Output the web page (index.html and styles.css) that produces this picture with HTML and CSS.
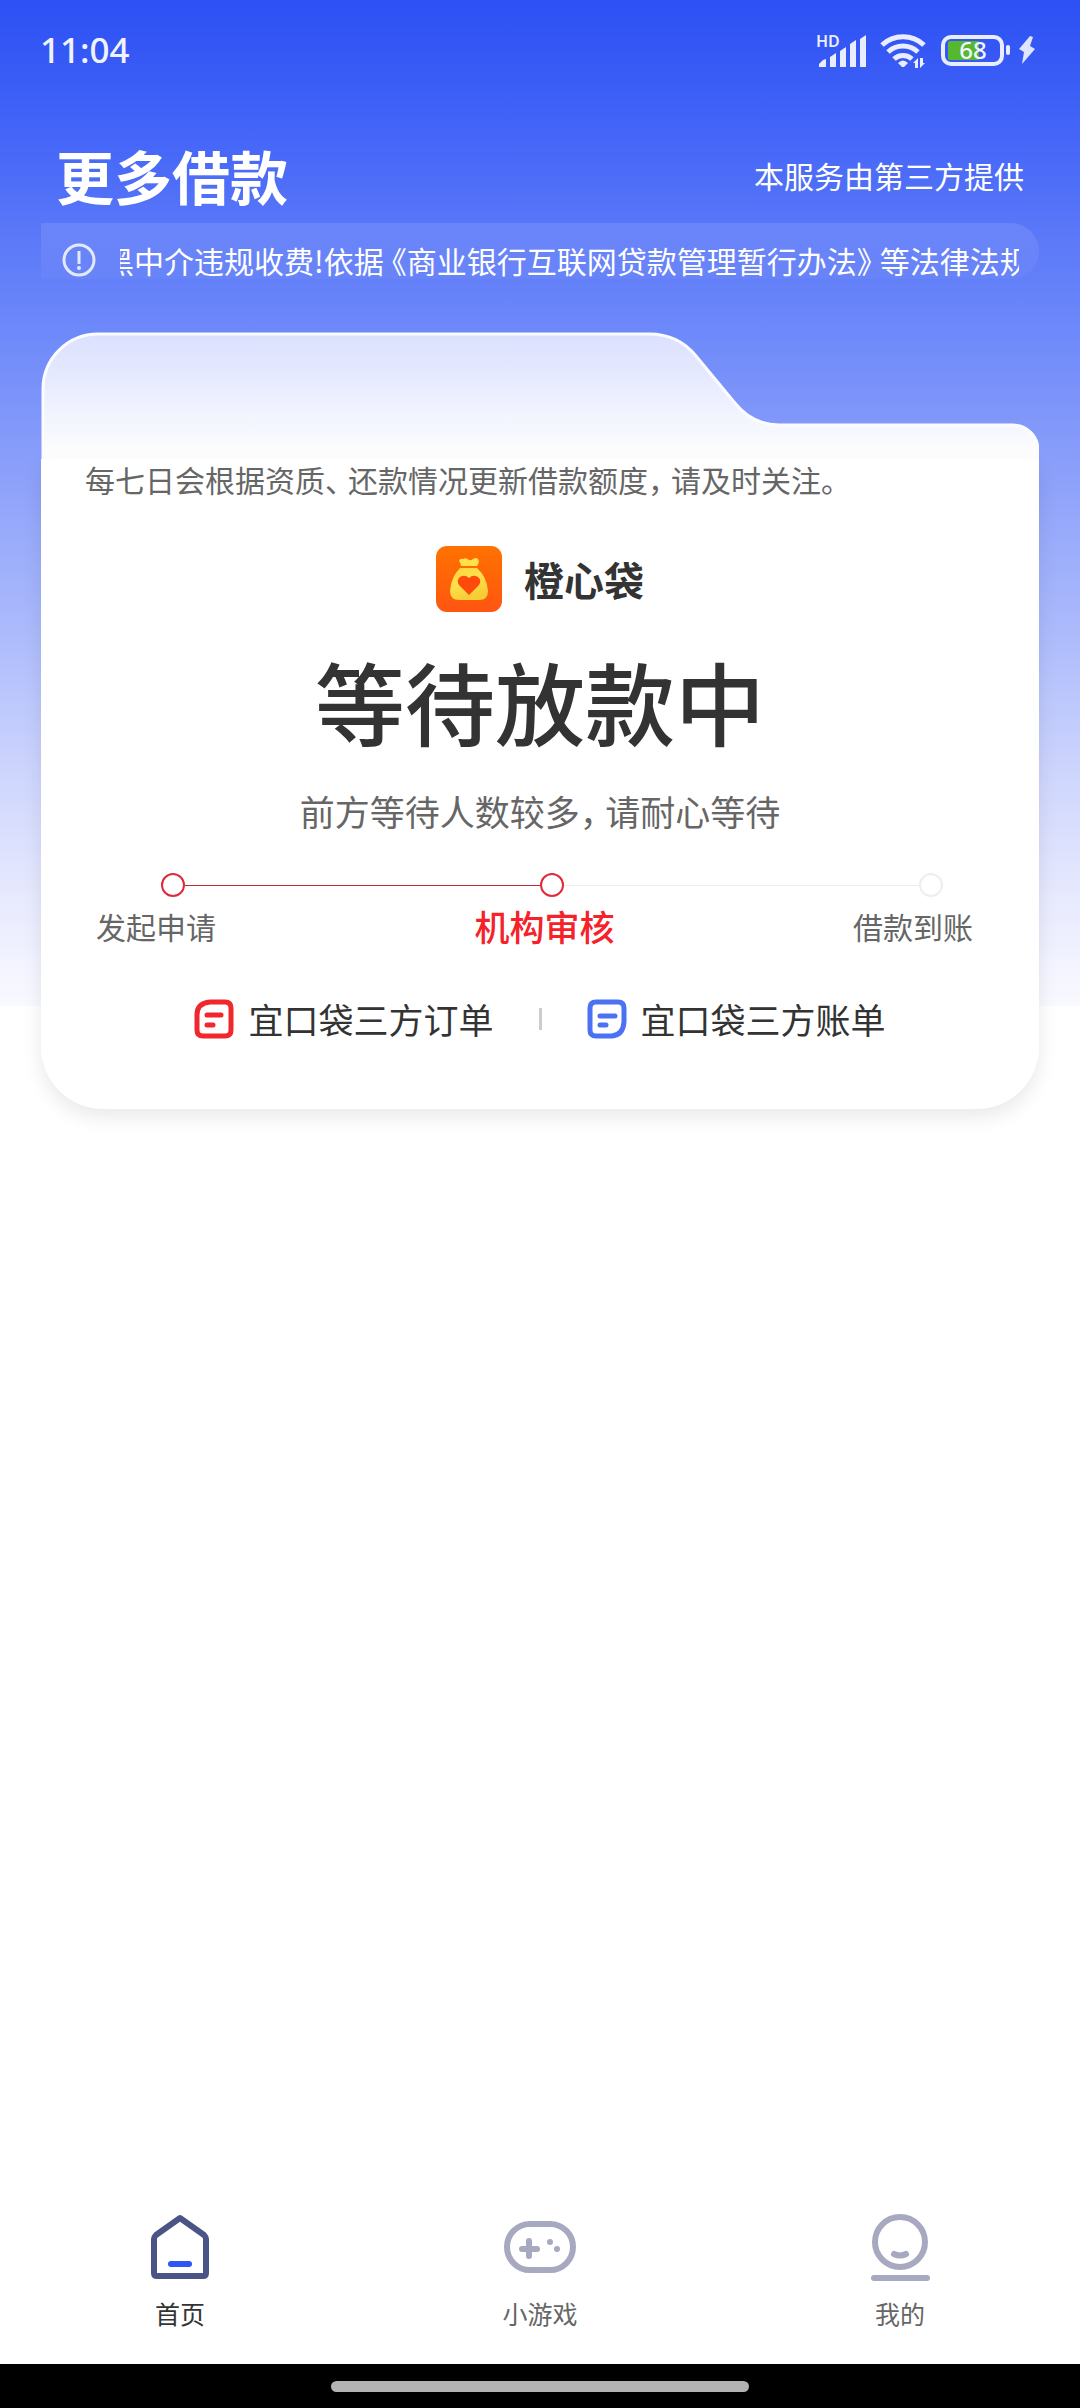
FILE: index.html
```html
<!DOCTYPE html>
<html lang="zh-CN">
<head>
<meta charset="utf-8">
<meta name="viewport" content="width=device-width, initial-scale=1">
<title>更多借款</title>
<link rel="stylesheet" href="styles.css">
</head>
<body>
<div class="status-bar">
  <time class="clock">11:04</time>
  <div class="status-icons">
    <svg class="signal" width="52" height="36" viewBox="0 0 52 36" aria-hidden="true">
      <text x="0" y="15" class="signal-hd">HD</text>
      <path d="M3 35v-3l4-4 3-1v8zM14 35V25l6-4v14zM24 35V19l6-4v20zM34 35V12l6-4v27zM44 35V7l6-4v32z" fill="#e9edff"/>
    </svg>
    <svg class="wifi" width="48" height="36" viewBox="0 0 48 36" aria-hidden="true">
      <g fill="none" stroke="#e9edff" stroke-width="5">
        <path d="M2 13a31 31 0 0 1 42 0"/>
        <path d="M8 20a22 22 0 0 1 30 0"/>
        <path d="M14 27a13 13 0 0 1 18 0"/>
      </g>
      <path d="M18 31q5-5 10 0l-4 4h-2z" fill="#e9edff"/>
      <path d="M33 31l5-5v10h-3v-5zM40 26h3v5h2l-5 5z" fill="#e9edff"/>
    </svg>
    <svg class="battery" width="72" height="32" viewBox="0 0 72 32" role="img" aria-label="68%">
      <rect x="3" y="3" width="59" height="27" rx="8" fill="none" stroke="#e9edff" stroke-width="4"/>
      <path d="M10 7h29v19H10q-2 0-2-2V9q0-2 2-2z" fill="#55b82e"/>
      <rect x="66" y="11" width="4" height="10" rx="2" fill="#e9edff"/>
      <text x="33" y="25" text-anchor="middle" class="battery-level">68</text>
    </svg>
    <svg class="bolt" width="18" height="30" viewBox="0 0 18 30" aria-hidden="true">
      <path d="M12 1L1 14l5 3-2 12 13-15-5-3 3-9z" fill="#dfe5ff"/>
    </svg>
  </div>
</div>

<header class="page-header">
  <h1 class="page-title">更多借款</h1>
  <p class="provider">本服务由第三方提供</p>
</header>

<div class="notice">
  <svg class="notice-icon" width="34" height="34" viewBox="0 0 34 34" aria-hidden="true">
    <circle cx="17" cy="17" r="15" fill="none" stroke="#e3e9ff" stroke-width="3"/>
    <path d="M17 8v13" stroke="#e3e9ff" stroke-width="3"/>
    <circle cx="17" cy="25" r="2" fill="#e3e9ff"/>
  </svg>
  <div class="notice-window">
    <p class="notice-text">黑中介违规收费!依据<span class="mark mark-open">《</span>商业银行互联网贷款管理暂行办法<span class="mark">》</span>等法律法规</p>
  </div>
</div>

<main class="card">
  <svg class="card-top" viewBox="0 0 998 127" preserveAspectRatio="none" aria-hidden="true">
    <defs>
      <linearGradient id="tab-fill" x1="0" y1="0" x2="0" y2="1">
        <stop offset="0" stop-color="#dbe0fe"/>
        <stop offset="0.5" stop-color="#eceffe"/>
        <stop offset="1" stop-color="#ffffff"/>
      </linearGradient>
    </defs>
    <path d="M2 127V57A55 55 0 0 1 57 2H608C628 2 643 9 655 24L693 70C704 84 718 93 738 93H972A25 25 0 0 1 997 118V127Z" fill="url(#tab-fill)"/>
    <path d="M2 127V57A55 55 0 0 1 57 2H608C628 2 643 9 655 24L693 70C704 84 718 93 738 93H972A25 25 0 0 1 997 118V127" fill="none" stroke="#fbfcff" stroke-width="3"/>
  </svg>
  <div class="card-body">
    <p class="tip">每七日会根据资质<span class="mark">、</span>还款情况更新借款额度<span class="mark">，</span>请及时关注<span class="mark">。</span></p>
    <div class="brand">
      <svg class="brand-logo" width="66" height="66" viewBox="0 0 66 66" aria-hidden="true">
        <defs>
          <linearGradient id="logo-bg" x1="0" y1="0" x2="0" y2="1">
            <stop offset="0" stop-color="#ff7200"/>
            <stop offset="1" stop-color="#ff5512"/>
          </linearGradient>
          <linearGradient id="logo-bag" x1="0" y1="0" x2="0.4" y2="1">
            <stop offset="0" stop-color="#ffd63a"/>
            <stop offset="0.5" stop-color="#ffe04c"/>
            <stop offset="1" stop-color="#f5cd35"/>
          </linearGradient>
        </defs>
        <rect width="66" height="66" rx="11" fill="url(#logo-bg)"/>
        <path d="M25 20q0-3-2-5 1-3 4-2 3-2 6 1 2 1 4-1 3-2 5 0 2 3-1 7H25z" fill="#ffe24a"/>
        <path d="M24 22h17q10 9 11 23 0 9-9 9H23q-9 0-9-9 1-14 10-23z" fill="url(#logo-bag)"/>
        <path d="M33 49L23 39q-3-5 1-8 5-3 9 1 4-4 9-1 4 3 1 8z" fill="#ff4a0c"/>
      </svg>
      <h2 class="brand-name">橙心袋</h2>
    </div>
    <p class="headline">等待放款中</p>
    <p class="subline">前方等待人数较多<span class="mark">，</span>请耐心等待</p>
    <div class="track" aria-hidden="true">
      <span class="dot dot-done"></span>
      <span class="rail rail-done"></span>
      <span class="dot dot-done"></span>
      <span class="rail"></span>
      <span class="dot"></span>
    </div>
    <ol class="steps">
      <li>发起申请</li>
      <li class="step-current" aria-current="step">机构审核</li>
      <li>借款到账</li>
    </ol>
    <div class="links">
      <a class="link" href="#orders">
        <svg width="40" height="40" viewBox="0 0 40 40" fill="none" stroke="#f0282d" stroke-width="5" stroke-linecap="round" aria-hidden="true">
          <path d="M16 3h15q6 0 6 6v22q0 6-6 6H9q-6 0-6-6V16Q3 4 16 3z"/>
          <path d="M13 16h14M13 26h6"/>
        </svg>
        宜口袋三方订单
      </a>
      <span class="divider"></span>
      <a class="link" href="#bills">
        <svg width="40" height="40" viewBox="0 0 40 40" fill="none" stroke="#4c72f4" stroke-width="5" stroke-linecap="round" aria-hidden="true">
          <path d="M9 3h22q6 0 6 6v14Q36 36 25 37H9q-6 0-6-6V9q0-6 6-6z"/>
          <path d="M13 17h15M13 26h6"/>
        </svg>
        宜口袋三方账单
      </a>
    </div>
  </div>
</main>

<nav class="tabs">
  <a class="tab tab-active" href="#home">
    <svg width="74" height="70" viewBox="0 0 74 70" fill="none" stroke="#4a5586" stroke-width="6" stroke-linejoin="round" stroke-linecap="round" aria-hidden="true">
      <path d="M37 5L13 22q-2 2-2 4v34q0 3 3 3h46q3 0 3-3V26q0-2-2-4z"/>
      <path d="M28 51h18" stroke="#2f56f2"/>
    </svg>
    首页
  </a>
  <a class="tab" href="#games">
    <svg width="74" height="70" viewBox="0 0 74 70" fill="none" stroke="#a6a9bf" stroke-width="6" stroke-linecap="round" aria-hidden="true">
      <rect x="4" y="11" width="66" height="46" rx="23"/>
      <path d="M19 36h15M26 28v15"/>
      <g fill="#a6a9bf" stroke="none"><circle cx="47" cy="29" r="3"/><circle cx="54" cy="36" r="3"/></g>
    </svg>
    小游戏
  </a>
  <a class="tab" href="#mine">
    <svg width="74" height="70" viewBox="0 0 74 70" fill="none" stroke="#a6a9bf" stroke-width="6" stroke-linecap="round" aria-hidden="true">
      <circle cx="37" cy="29" r="25"/>
      <path d="M31 41q6 3 12 0M11 65h53"/>
    </svg>
    我的
  </a>
</nav>
<div class="gesture-bar"><span class="gesture-pill"></span></div>
</body>
</html>
```
FILE: styles.css
```css
* {
  box-sizing: border-box;
}

body {
  margin: 0;
  min-height: 100vh;
  display: flex;
  flex-direction: column;
  font-family: "Noto Sans CJK SC", sans-serif;
  font-size: 30px;
  line-height: 40px;
  color: #333;
  background: #fff linear-gradient(#2c50f4 0, #385bf5 70px, #4768f8 150px, #5c79f8 240px, #6b87fa 320px, #8399fa 430px, #aebcfc 640px, #cdd5fd 770px, #e6e8fe 890px, #f9faff 1006px) no-repeat 0 0 / 100% 1006px;
}

h1,
h2,
p,
ol {
  margin: 0;
  padding: 0;
  font-weight: 400;
}

a {
  color: inherit;
  text-decoration: none;
}

svg {
  flex: none;
}

/* Half-width punctuation with a little air on its open side */
.mark {
  font-feature-settings: "halt";
  padding-right: 8px;
}

.mark-open {
  padding: 0 0 0 8px;
}

.status-bar {
  display: flex;
  align-items: center;
  justify-content: space-between;
  height: 100px;
  padding: 0 44px 0 40px;
}

.clock {
  font-family: "Noto Sans", sans-serif;
  font-size: 35px;
  font-weight: 500;
  color: #f0f3ff;
}

.status-icons {
  display: flex;
  align-items: center;
}

.signal,
.wifi {
  margin-right: 12px;
}

.battery {
  margin-right: 6px;
}

.signal-hd {
  font: 600 16px "Noto Sans", sans-serif;
  fill: #e9edff;
}

.battery-level {
  font: 500 24px "Noto Sans", sans-serif;
  fill: #f4f6ff;
}

.page-header {
  display: flex;
  align-items: center;
  justify-content: space-between;
  padding: 45px 56px 18px;
  color: #fff;
}

.page-title {
  font-size: 58px;
  line-height: 60px;
  font-weight: 700;
}

.notice {
  display: flex;
  align-items: center;
  gap: 24px;
  height: 56px;
  margin: 0 41px;
  padding: 18px 20px 0 21px;
  border-radius: 0 28px 28px 0;
  background: linear-gradient(rgba(255, 255, 255, 0.11), rgba(255, 255, 255, 0.03));
  color: #fff;
}

.notice-window {
  flex: 1;
  min-width: 0;
  overflow: hidden;
}

.notice-text {
  margin-left: -16px;
  white-space: nowrap;
}

.card {
  margin: 53px 41px 0;
  display: flex;
  flex-direction: column;
}

.card-top {
  width: 100%;
  height: 127px;
}

.card-body {
  padding: 0 44px 70px;
  border-radius: 0 0 62px 62px;
  background: #fff;
  box-shadow: 0 8px 20px rgba(0, 0, 0, 0.09);
}

.tip {
  color: #666;
}

.brand {
  display: flex;
  align-items: center;
  justify-content: center;
  gap: 22px;
  margin-top: 47px;
}

.brand-name {
  font-size: 40px;
  font-weight: 700;
}

.headline {
  margin-top: 38px;
  font-size: 90px;
  line-height: 100px;
  font-weight: 500;
  text-align: center;
}

.subline {
  margin-top: 41px;
  font-size: 35px;
  color: #666;
  text-align: center;
}

.track {
  display: flex;
  align-items: center;
  margin-top: 42px;
  padding: 0 52px 0 76px;
}

.dot {
  width: 24px;
  height: 24px;
  border: 2px solid #eee;
  border-radius: 50%;
}

.dot-done {
  border-color: #dc2c3a;
}

.rail {
  flex: 1;
  height: 1px;
  background: #eee;
}

.rail-done {
  background: #b8303a;
}

.steps {
  display: flex;
  align-items: center;
  justify-content: space-between;
  margin-top: 9px;
  padding: 0 22px 0 11px;
  list-style: none;
  color: #666;
}

.step-current {
  padding-left: 20px;
  font-size: 35px;
  font-weight: 500;
  color: #f5222a;
}

.links {
  display: flex;
  align-items: center;
  justify-content: center;
  gap: 45px;
  margin-top: 53px;
}

.link {
  display: flex;
  align-items: center;
  gap: 14px;
  font-size: 35px;
}

.divider {
  width: 3px;
  height: 22px;
  background: #ccc;
}

.tabs {
  display: flex;
  margin-top: auto;
  padding-bottom: 31px;
}

.tab {
  flex: 1;
  display: flex;
  flex-direction: column;
  align-items: center;
  gap: 10px;
  font-size: 25px;
  color: #666;
}

.tab-active {
  color: #333;
}

.gesture-bar {
  display: flex;
  align-items: center;
  justify-content: center;
  height: 44px;
  background: #000;
}

.gesture-pill {
  width: 418px;
  height: 11px;
  border-radius: 6px;
  background: #b3b3b3;
}
```
